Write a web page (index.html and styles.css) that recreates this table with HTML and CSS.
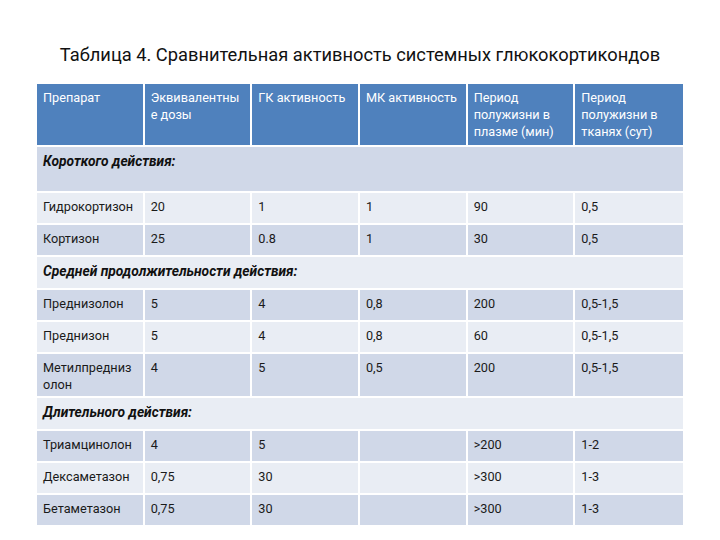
FILE: index.html
```html
<!DOCTYPE html>
<html lang="ru">
<head>
<meta charset="utf-8">
<title>Таблица 4</title>
<link rel="stylesheet" href="styles.css">
</head>
<body>
<div class="page">
  <h1 class="title">Таблица 4. Сравнительная активность системных глюкокортикондов</h1>
  <table class="grid">
    <colgroup>
      <col class="c"><col class="c"><col class="c"><col class="c"><col class="c"><col class="c">
    </colgroup>
    <thead>
      <tr class="head">
        <th>Препарат</th>
        <th>Эквивалентны<br>е дозы</th>
        <th>ГК активность</th>
        <th>МК активность</th>
        <th>Период<br>полужизни в<br>плазме (мин)</th>
        <th>Период<br>полужизни в<br>тканях (сут)</th>
      </tr>
    </thead>
    <tbody>
      <tr class="group tall dark"><td colspan="6">Короткого действия:</td></tr>
      <tr class="light"><td>Гидрокортизон</td><td>20</td><td>1</td><td>1</td><td>90</td><td>0,5</td></tr>
      <tr class="dark"><td>Кортизон</td><td>25</td><td>0.8</td><td>1</td><td>30</td><td>0,5</td></tr>
      <tr class="group light"><td colspan="6">Средней продолжительности действия:</td></tr>
      <tr class="dark"><td>Преднизолон</td><td>5</td><td>4</td><td>0,8</td><td>200</td><td>0,5-1,5</td></tr>
      <tr class="light"><td>Преднизон</td><td>5</td><td>4</td><td>0,8</td><td>60</td><td>0,5-1,5</td></tr>
      <tr class="dark two"><td>Метилпредниз<br>олон</td><td>4</td><td>5</td><td>0,5</td><td>200</td><td>0,5-1,5</td></tr>
      <tr class="group light"><td colspan="6">Длительного действия:</td></tr>
      <tr class="dark"><td>Триамцинолон</td><td>4</td><td>5</td><td></td><td>&gt;200</td><td>1-2</td></tr>
      <tr class="light"><td>Дексаметазон</td><td>0,75</td><td>30</td><td></td><td>&gt;300</td><td>1-3</td></tr>
      <tr class="dark"><td>Бетаметазон</td><td>0,75</td><td>30</td><td></td><td>&gt;300</td><td>1-3</td></tr>
    </tbody>
  </table>
</div>
</body>
</html>
```

FILE: styles.css
```css
html, body {
  margin: 0;
  padding: 0;
  background: #ffffff;
}

.page {
  width: 720px;
  height: 540px;
  padding: 0 37px;
  box-sizing: border-box;
  font-family: Roboto, "Noto Sans", sans-serif;
  color: #1a1a1a;
}

.title {
  margin: 0;
  padding-top: 43px;
  height: 41px;
  line-height: 24px;
  font-size: 18.3px;
  font-weight: 400;
  text-align: center;
  color: #111;
  white-space: nowrap;
}

.grid {
  width: 646px;
  table-layout: fixed;
  border-collapse: separate;
  border-spacing: 0;
  font-size: 12.7px;
  line-height: 17px;
}

.grid .c {
  width: 16.666%;
}

.grid th,
.grid td {
  text-align: left;
  vertical-align: top;
  padding: 5px 5px 0 6px;
  border-right: 2px solid #ffffff;
  border-bottom: 2px solid #ffffff;
  overflow: hidden;
  white-space: nowrap;
}

.grid th:last-child,
.grid td:last-child {
  border-right: none;
}

.head th {
  background: #4f81bd;
  color: #ffffff;
  font-weight: 400;
  height: 56px;
}

.grid tbody td {
  height: 25.2px;
}

.grid tbody tr.tall td {
  height: 38px;
}

.grid tbody tr.two td {
  height: 37px;
}

.dark td {
  background: #d0d8e8;
}

.light td {
  background: #e9edf4;
}

.group td {
  font-weight: 700;
  font-style: italic;
  font-size: 13.8px;
  padding-top: 6px;
  color: #111;
}

.grid tbody tr.group td {
  height: 24.4px;
}

.grid tbody tr.group.tall td {
  height: 38px;
}
```
